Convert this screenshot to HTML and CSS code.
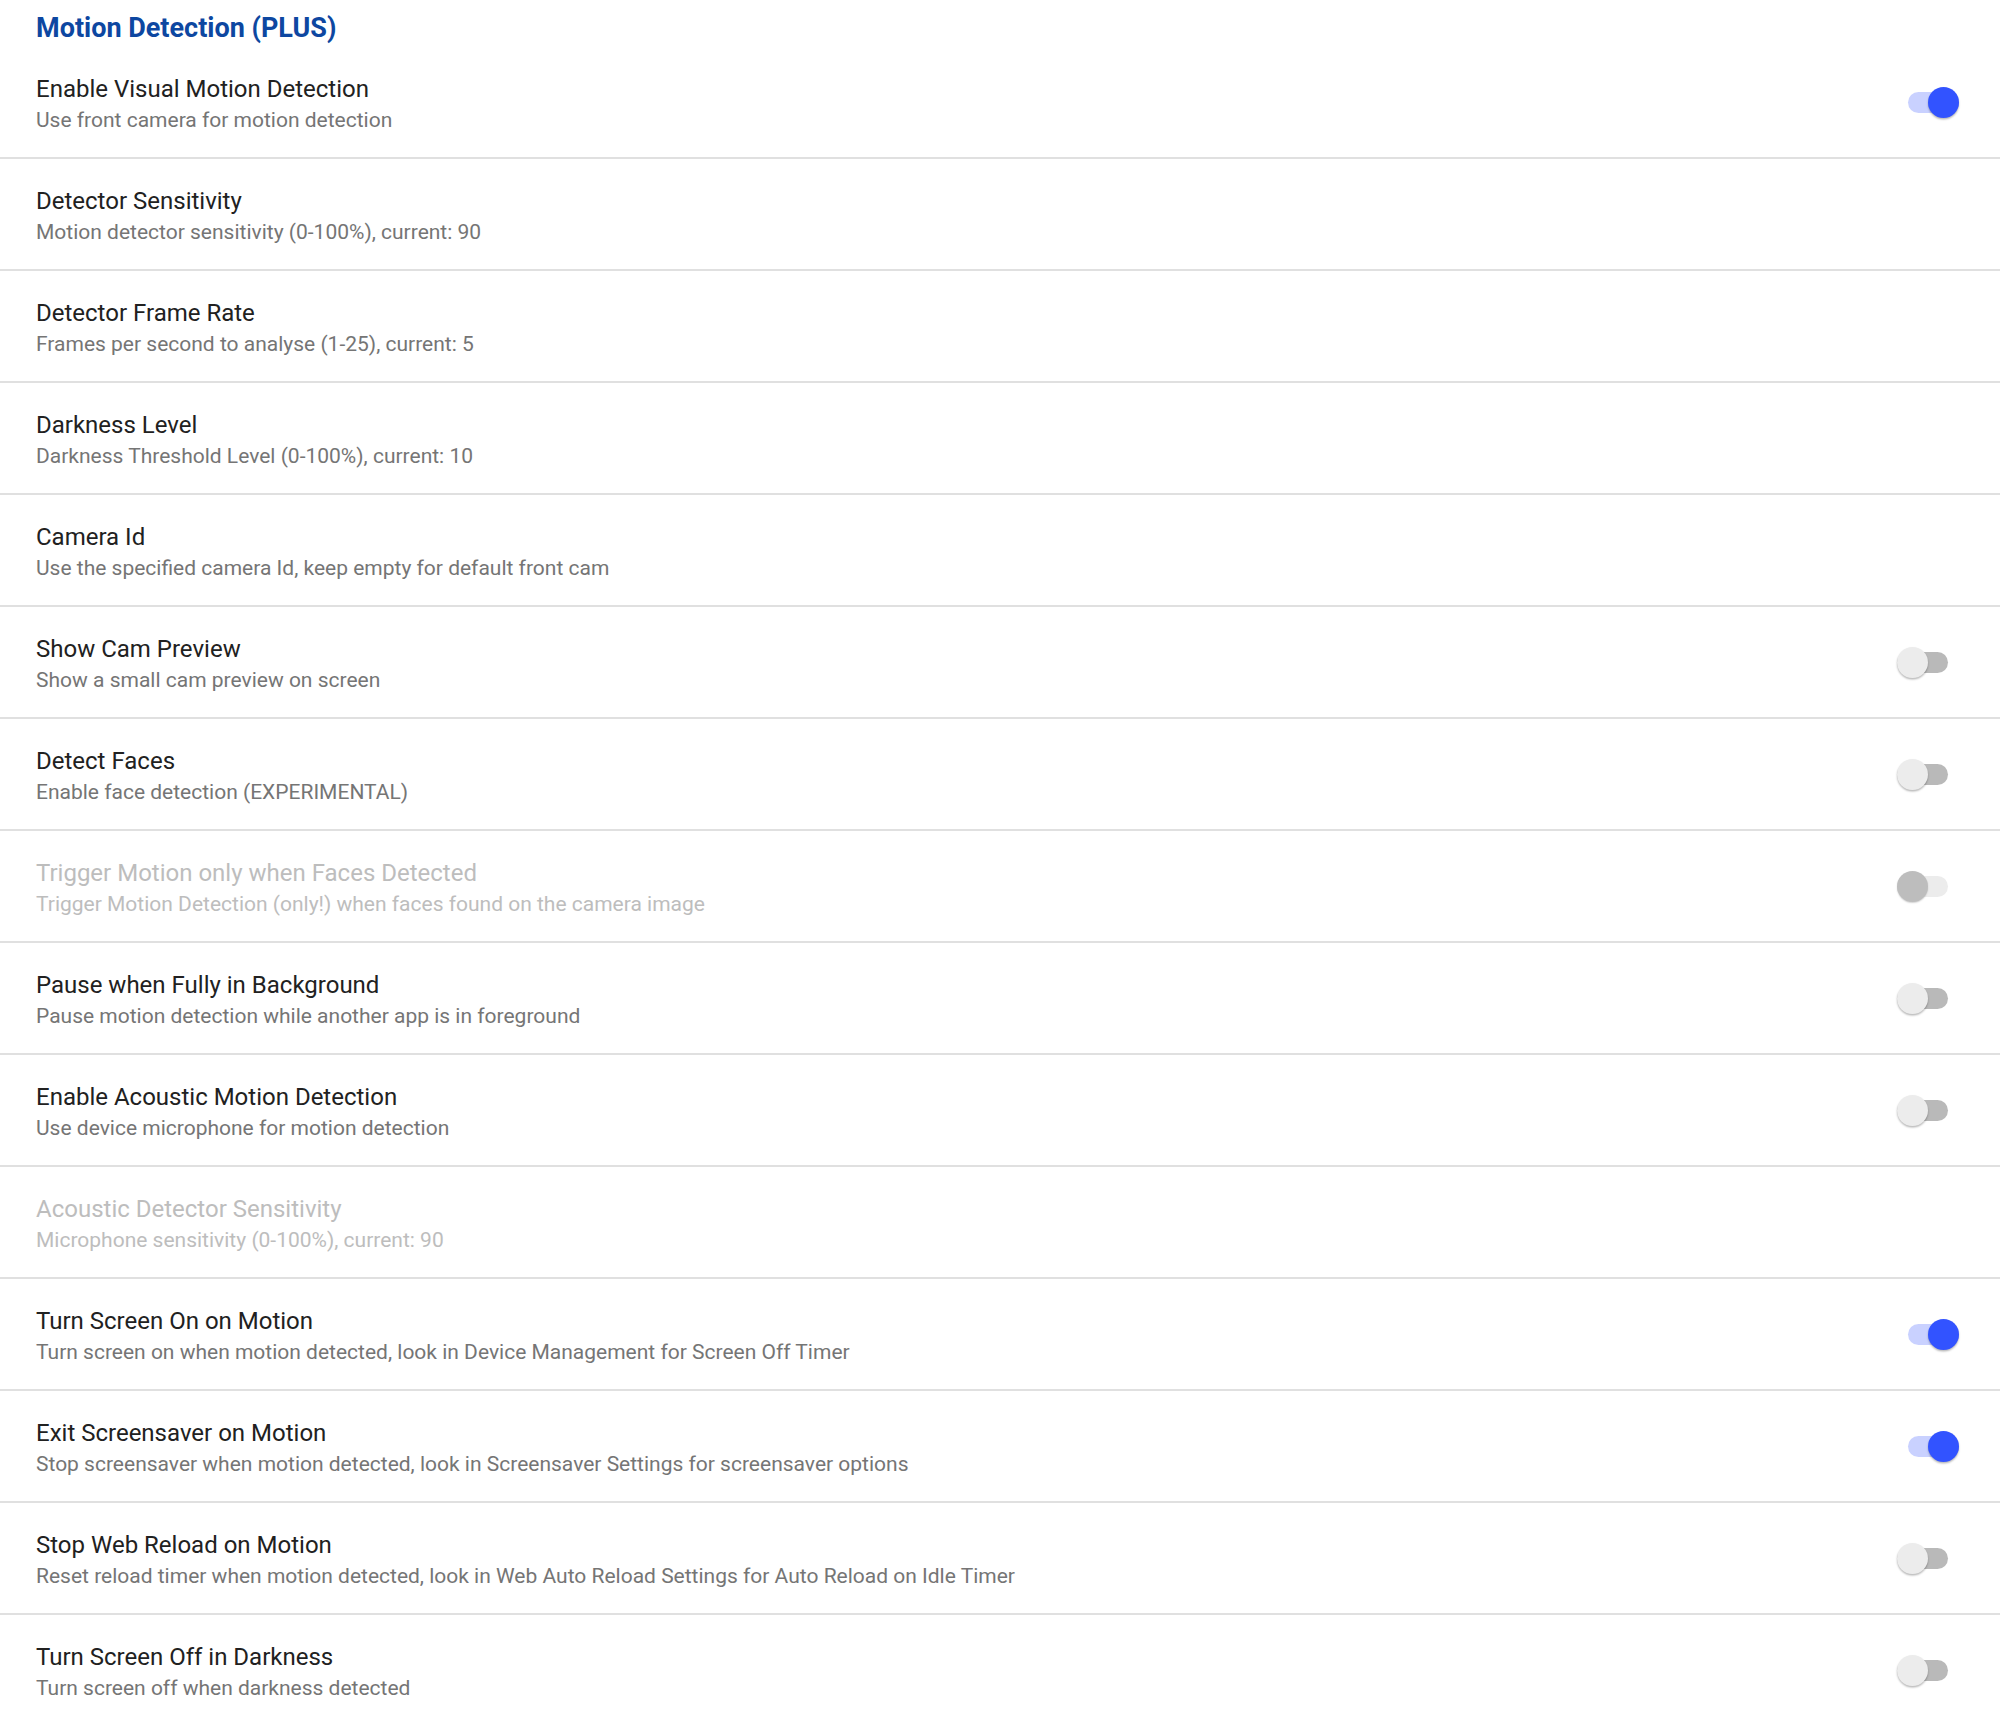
FILE: index.html
```html
<!DOCTYPE html>
<html lang="en">
<head>
<meta charset="utf-8">
<title>Motion Detection (PLUS)</title>
<link rel="stylesheet" href="styles.css">
</head>
<body>
<div class="prefs">
  <div class="category">Motion Detection (PLUS)</div>

  <div class="pref">
    <div class="text"><div class="title">Enable Visual Motion Detection</div><div class="summary">Use front camera for motion detection</div></div>
    <div class="switch on"><span class="track"></span><span class="thumb"></span></div>
  </div>

  <div class="pref">
    <div class="text"><div class="title">Detector Sensitivity</div><div class="summary">Motion detector sensitivity (0-100%), current: 90</div></div>
  </div>

  <div class="pref">
    <div class="text"><div class="title">Detector Frame Rate</div><div class="summary">Frames per second to analyse (1-25), current: 5</div></div>
  </div>

  <div class="pref">
    <div class="text"><div class="title">Darkness Level</div><div class="summary">Darkness Threshold Level (0-100%), current: 10</div></div>
  </div>

  <div class="pref">
    <div class="text"><div class="title">Camera Id</div><div class="summary">Use the specified camera Id, keep empty for default front cam</div></div>
  </div>

  <div class="pref">
    <div class="text"><div class="title">Show Cam Preview</div><div class="summary">Show a small cam preview on screen</div></div>
    <div class="switch off"><span class="track"></span><span class="thumb"></span></div>
  </div>

  <div class="pref">
    <div class="text"><div class="title">Detect Faces</div><div class="summary">Enable face detection (EXPERIMENTAL)</div></div>
    <div class="switch off"><span class="track"></span><span class="thumb"></span></div>
  </div>

  <div class="pref disabled">
    <div class="text"><div class="title">Trigger Motion only when Faces Detected</div><div class="summary">Trigger Motion Detection (only!) when faces found on the camera image</div></div>
    <div class="switch off"><span class="track"></span><span class="thumb"></span></div>
  </div>

  <div class="pref">
    <div class="text"><div class="title">Pause when Fully in Background</div><div class="summary">Pause motion detection while another app is in foreground</div></div>
    <div class="switch off"><span class="track"></span><span class="thumb"></span></div>
  </div>

  <div class="pref">
    <div class="text"><div class="title">Enable Acoustic Motion Detection</div><div class="summary">Use device microphone for motion detection</div></div>
    <div class="switch off"><span class="track"></span><span class="thumb"></span></div>
  </div>

  <div class="pref disabled">
    <div class="text"><div class="title">Acoustic Detector Sensitivity</div><div class="summary">Microphone sensitivity (0-100%), current: 90</div></div>
  </div>

  <div class="pref">
    <div class="text"><div class="title">Turn Screen On on Motion</div><div class="summary">Turn screen on when motion detected, look in Device Management for Screen Off Timer</div></div>
    <div class="switch on"><span class="track"></span><span class="thumb"></span></div>
  </div>

  <div class="pref">
    <div class="text"><div class="title">Exit Screensaver on Motion</div><div class="summary">Stop screensaver when motion detected, look in Screensaver Settings for screensaver options</div></div>
    <div class="switch on"><span class="track"></span><span class="thumb"></span></div>
  </div>

  <div class="pref">
    <div class="text"><div class="title">Stop Web Reload on Motion</div><div class="summary">Reset reload timer when motion detected, look in Web Auto Reload Settings for Auto Reload on Idle Timer</div></div>
    <div class="switch off"><span class="track"></span><span class="thumb"></span></div>
  </div>

  <div class="pref last">
    <div class="text"><div class="title">Turn Screen Off in Darkness</div><div class="summary">Turn screen off when darkness detected</div></div>
    <div class="switch off"><span class="track"></span><span class="thumb"></span></div>
  </div>
</div>
</body>
</html>
```

FILE: styles.css
```css
html, body {
  margin: 0;
  padding: 0;
  background: #ffffff;
}

body {
  font-family: Roboto, "Liberation Sans", sans-serif;
  width: 2000px;
}

.prefs {
  display: flex;
  flex-direction: column;
}

.category {
  height: 47px;
  box-sizing: border-box;
  padding: 10px 0 1px 36px;
  line-height: 36px;
  font-size: 27px;
  font-weight: 700;
  color: #0d47a1;
}

.pref {
  display: flex;
  align-items: flex-start;
  height: 110px;
  padding-left: 36px;
  border-bottom: 2px solid #e0e0e0;
}

.pref.last {
  border-bottom: none;
}

.text {
  flex: 1;
  padding-top: 26px;
}

.title {
  font-size: 24px;
  line-height: 32px;
  color: #212121;
}

.summary {
  margin-top: 1px;
  font-size: 21px;
  line-height: 28px;
  color: #757575;
}

.disabled .title,
.disabled .summary {
  color: #bdbdbd;
}

.switch {
  position: relative;
  width: 51px;
  height: 31px;
  align-self: center;
}

.switch.off {
  margin-right: 52px;
}

.switch.on {
  margin-right: 41px;
}

.track {
  position: absolute;
  left: 0;
  top: 5px;
  width: 51px;
  height: 21px;
  border-radius: 11px;
}

.thumb {
  position: absolute;
  top: 0;
  width: 31px;
  height: 31px;
  border-radius: 50%;
  box-shadow: 0 1.5px 2px rgba(0, 0, 0, 0.28);
}

.switch.on .track {
  background: #c9d1ff;
}

.switch.on .thumb {
  left: 20px;
  background: #3253ff;
}

.switch.off .track {
  background: #b9b9b9;
}

.switch.off .thumb {
  left: 0;
  background: #ececec;
}

.disabled .switch.off .track {
  background: #ececec;
}

.disabled .switch.off .thumb {
  background: #bdbdbd;
  box-shadow: 0 1px 1.5px rgba(0, 0, 0, 0.18);
}
```
